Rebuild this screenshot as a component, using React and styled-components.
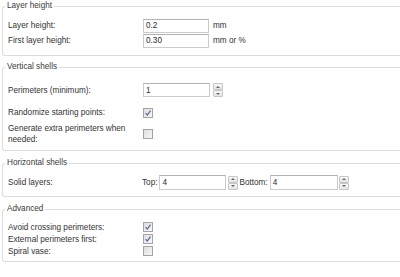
import React from "react";
import styled, { createGlobalStyle } from "styled-components";

const GlobalStyle = createGlobalStyle`
    html, body {
        margin: 0;
        padding: 0;
        background: #ffffff;
        overflow: hidden;
    }
    body {
        font-family: "Liberation Sans", Arial, sans-serif;
        font-size: 8.2px;
        color: #333333;
    }
`;

const Page = styled.div`
    width: 398px;
    padding-left: 2px;
`;

const Group = styled.fieldset`
    margin: ${props => props.$mt || 0}px 0 0 0;
    padding: ${props => props.$pt}px 0 ${props => props.$pb}px 5px;
    border: 1px solid #dcdcdc;
    border-right: none;
    border-radius: 3px 0 0 3px;
    min-width: 0;
`;

const Title = styled.legend`
    padding: 0 2px;
    margin-left: -3px;
    line-height: 12px;
    font-size: 8.2px;
    color: #3a3a3a;
`;

const Row = styled.div`
    display: grid;
    grid-template-columns: 135px auto;
    align-items: center;
    margin-top: ${props => props.$mt || 0}px;
    min-height: ${props => props.$h || 0}px;
`;

const Label = styled.div`
    line-height: 11px;
    max-width: 124px;
`;

const Controls = styled.div`
    display: flex;
    align-items: center;
`;

const Input = styled.div`
    box-sizing: border-box;
    width: ${props => props.$w || 67}px;
    height: ${props => props.$h || 14}px;
    border: 1px solid #c9cbd0;
    border-top-color: #b0b2b8;
    background: #fff;
    padding-left: 2px;
    display: flex;
    align-items: center;
    color: #2a2a2a;
`;

const Unit = styled.span`
    margin-left: 4px;
`;

const SpinWrap = styled.div`
    display: flex;
    flex-direction: column;
    margin-left: ${props => props.$ml || 2}px;
    height: 14px;
`;

const SpinButton = styled.div`
    box-sizing: border-box;
    width: 10px;
    height: 7px;
    border: 1px solid #c6c6c6;
    border-radius: 1px;
    background: linear-gradient(#f8f8f8, #e4e4e4);
    display: flex;
    align-items: center;
    justify-content: center;
`;

const Arrow = styled.div`
    width: 0;
    height: 0;
    border-left: 2px solid transparent;
    border-right: 2px solid transparent;
    ${props => props.$down
        ? "border-top: 2px solid #666;"
        : "border-bottom: 2px solid #666;"}
`;

const Box = styled.div`
    box-sizing: border-box;
    width: 10px;
    height: 10px;
    border: 1px solid #a4a4a4;
    background: linear-gradient(135deg, #dedede, #f7f7f7);
    display: flex;
    align-items: center;
    justify-content: center;
`;

const Text = styled.span`
    margin-right: ${props => props.$mr || 0}px;
    margin-left: ${props => props.$ml || 0}px;
`;

const Spinner = ({ ml }) =>
    <SpinWrap $ml={ml}>
        <SpinButton><Arrow /></SpinButton>
        <SpinButton><Arrow $down /></SpinButton>
    </SpinWrap>

const Check = ({ checked }) =>
    <Box>
        {checked &&
            <svg width="8" height="8" viewBox="0 0 8 8">
                <path d="M1.6 4.2 L3.3 6.1 L6.5 1.6" fill="none" stroke="#52659a" strokeWidth="1.2" />
            </svg>}
    </Box>

const App = () =>
    <>
        <GlobalStyle />
        <Page>
            <Group $pt={6} $pb={7}>
                <Title>Layer height</Title>
                <Row $h={15}>
                    <Label>Layer height:</Label>
                    <Controls><Input $w={66}>0.2</Input><Unit>mm</Unit></Controls>
                </Row>
                <Row $h={15}>
                    <Label>First layer height:</Label>
                    <Controls><Input $w={66}>0.30</Input><Unit>mm or %</Unit></Controls>
                </Row>
            </Group>

            <Group $mt={5} $pt={10} $pb={5}>
                <Title>Vertical shells</Title>
                <Row $h={14}>
                    <Label>Perimeters (minimum):</Label>
                    <Controls><Input>1</Input><Spinner ml={3} /></Controls>
                </Row>
                <Row $mt={10} $h={11}>
                    <Label>Randomize starting points:</Label>
                    <Controls><Check checked /></Controls>
                </Row>
                <Row $mt={5} $h={22}>
                    <Label>Generate extra perimeters when needed:</Label>
                    <Controls><Check /></Controls>
                </Row>
            </Group>

            <Group $mt={6} $pt={6} $pb={6}>
                <Title>Horizontal shells</Title>
                <Row $h={15}>
                    <Label>Solid layers:</Label>
                    <Controls>
                        <Text $mr={2} $ml={-1}>Top:</Text>
                        <Input $h={15}>4</Input>
                        <Spinner ml={2} />
                        <Text $ml={1} $mr={2}>Bottom:</Text>
                        <Input $h={15} $w={68}>4</Input>
                        <Spinner ml={1} />
                    </Controls>
                </Row>
            </Group>

            <Group $mt={6} $pt={6} $pb={4}>
                <Title>Advanced</Title>
                <Row $h={12}>
                    <Label>Avoid crossing perimeters:</Label>
                    <Controls><Check checked /></Controls>
                </Row>
                <Row $h={12}>
                    <Label>External perimeters first:</Label>
                    <Controls><Check checked /></Controls>
                </Row>
                <Row $h={12}>
                    <Label>Spiral vase:</Label>
                    <Controls><Check /></Controls>
                </Row>
            </Group>
        </Page>
    </>


export default App;
